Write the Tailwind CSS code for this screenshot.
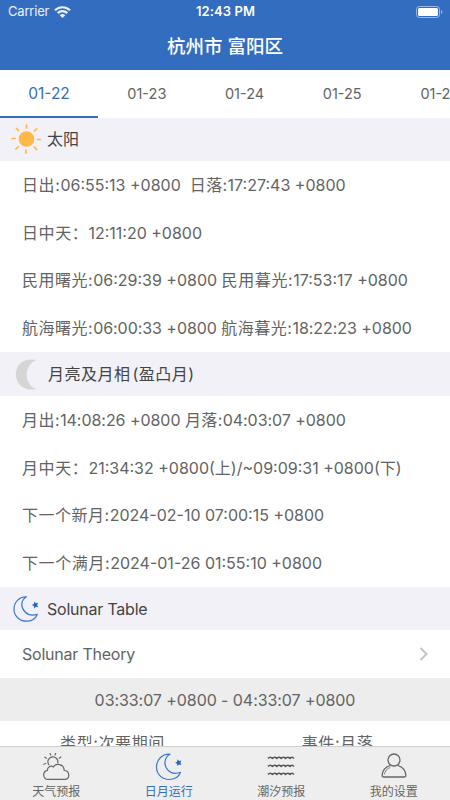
<!DOCTYPE html>
<html lang="zh-CN">

<head>
    <meta charset="UTF-8" />
    <meta name="viewport" content="width=device-width, initial-scale=1.0" />
    <title>日月运行</title>
    <script src="https://cdn.jsdelivr.net/npm/@tailwindcss/browser@4"></script>
</head>

<body class="bg-white font-['Inter','Noto_Sans_CJK_SC',sans-serif] text-[#636363]">
    <div class="flex h-[800px] w-[450px] flex-col overflow-hidden">
        <!-- Status bar and title -->
        <header class="h-[70px] shrink-0 bg-[#336dc0] text-white">
            <div class="grid h-6 grid-cols-3 items-center pr-[7px] pl-2">
                <div class="flex items-center gap-[5px] text-[13px] tracking-[-0.2px] text-white/90">
                    <span>Carrier</span>
                    <svg class="h-3 w-[17px]" viewBox="0 0 17 12" fill="none" stroke="currentColor" stroke-width="2.2">
                        <path d="M1 4.3C5.2.2 11.8.2 16 4.3M3.7 7.1C6.4 4.5 10.6 4.5 13.3 7.1" />
                        <path d="M8.5 12 5.7 9.2C7.3 7.7 9.7 7.7 11.3 9.2Z" fill="currentColor" stroke="none" />
                    </svg>
                </div>
                <span class="text-center text-[13px] font-semibold tracking-[0.1px]">12:43 PM</span>
                <svg class="h-3 w-[27px] justify-self-end" viewBox="0 0 27 12">
                    <rect x=".5" y=".5" width="23" height="11" rx="3" fill="none" stroke="#fff" stroke-opacity=".5" />
                    <rect x="2" y="2" width="20" height="8" rx="1.5" fill="#fff" />
                    <path d="M25 4v4c2-.8 2-3.2 0-4" fill="#fff" fill-opacity=".5" />
                </svg>
            </div>
            <h1 class="flex h-[45px] items-center justify-center text-[18.5px] font-medium">杭州市 富阳区</h1>
        </header>

        <!-- Dates -->
        <nav class="flex h-12 shrink-0 overflow-hidden text-[14.5px]">
            <a class="flex w-[98px] shrink-0 items-center justify-center border-b-[2.5px] border-[#336dc0] pt-[2px] text-[15.5px] text-[#336dc0]">01-22</a>
            <a class="flex w-[97.7px] shrink-0 items-center justify-center">01-23</a>
            <a class="flex w-[97.7px] shrink-0 items-center justify-center">01-24</a>
            <a class="flex w-[97.7px] shrink-0 items-center justify-center">01-25</a>
            <a class="flex w-[97.7px] shrink-0 items-center justify-center">01-26</a>
        </nav>

        <main class="min-h-0 flex-1 overflow-hidden text-base">
            <h2 class="flex h-[43px] items-center bg-[#f2f1f7] pb-px pl-[11px] text-[#444]">
                <svg class="mr-[6px] size-[30px]" viewBox="0 0 30 30" fill="#ffb748" stroke="#ffb748" stroke-width="1.7" stroke-linecap="round">
                    <circle cx="15.5" cy="15" r="7" />
                    <path d="M15.5 1v3M15 26v3M1 14.500h3M26.500 15.500h3M5.500 4.500l2 2.300M25.800 4.800l-2.300 2M4.800 25l2.300-2.200M25.500 25.500l-2.300-2.700" />
                </svg>
                <span>太阳</span>
            </h2>
            <section class="grid h-[191px] grid-rows-4 items-center pl-[22px]">
                <p><span class="tracking-[0.6px]">日出:</span>06:55:13 +0800&nbsp; <span class="tracking-[0.4px]">日落:</span>17:27:43 +0800</p>
                <p><span class="tracking-[0.6px]">日中天：</span>12:11:20 +0800</p>
                <p><span class="tracking-[0.5px]">民用曙光:</span>06:29:39 +0800 <span class="tracking-[0.6px]">民用暮光:</span>17:53:17 +0800</p>
                <p class="tracking-[-0.05px]"><span class="tracking-[0.5px]">航海曙光:</span>06:00:33 +0800 <span class="tracking-[0.5px]">航海暮光:</span>18:22:23 +0800</p>
            </section>

            <h2 class="flex h-11 items-center bg-[#f2f1f7] pl-[15px] text-[#444]">
                <svg class="mr-[11px] h-[31px] w-[22px]" viewBox="0 0 22 31" fill="#d5d5d5">
                    <path d="M21.5 1C6-2 .8 8 .8 15.5S7 33 21.5 30C8.5 26 8.5 6 21.5 1Z" />
                </svg>
                <span class="tracking-[0.5px]">月亮及月相<span class="ml-[2px]">(盈凸月)</span></span>
            </h2>
            <section class="grid h-[191px] grid-rows-4 items-center pl-[22px]">
                <p class="tracking-[-0.05px]"><span class="tracking-[0.5px]">月出:</span>14:08:26 +0800 <span class="tracking-[0.4px]">月落:</span>04:03:07 +0800</p>
                <p><span class="tracking-[0.6px]">月中天：</span>21:34:32 +0800(上)/~09:09:31 +0800(下)</p>
                <p><span class="tracking-[0.5px]">下一个新月:</span>2024-02-10 07:00:15 +0800</p>
                <p><span class="tracking-[0.6px]">下一个满月:</span>2024-01-26 01:55:10 +0800</p>
            </section>

            <h2 class="flex h-[43px] items-center bg-[#f2f1f7] pl-[13px] text-[#444]">
                <svg class="mr-[8px] size-[26px]" viewBox="0 0 26 26" fill="none" stroke="#3c78cf" stroke-width="1.2" stroke-linejoin="round">
                    <path d="M13.500.8C6 .4 1 6.500 1 13.200 1 20 6.700 25.200 13.300 25.200c5.800 0 9.500-3 11-7-3.700 1.200-8.800 1.200-12.200-2.200C7.300 11.200 7.800 4.200 13.500.8Z" />
                    <path d="m21.200 5.600 1.600 1.600 2.400-.3-1.100 2.200 1.100 2.200-2.400-.5-1.700 1.700-.2-2.400-2.200-1.100 2.200-1Z" fill="#2468c4" stroke="none" />
                </svg>
                <span class="tracking-[-0.22px]">Solunar Table</span>
            </h2>
            <a class="flex h-12 items-center justify-between pr-[22px] pl-[22px]">
                <span class="tracking-[-0.22px]">Solunar Theory</span>
                <svg class="h-[14px] w-[9px]" viewBox="0 0 9 14" fill="none" stroke="#c4c4c6" stroke-width="2">
                    <path d="m1.5 1 6 6-6 6" />
                </svg>
            </a>
            <p class="flex h-[43px] items-center justify-center bg-[#ededed] tracking-[-0.07px]">03:33:07 +0800 - 04:33:07 +0800</p>
            <div class="grid h-[43px] grid-cols-2 items-center text-center">
                <p class="tracking-[0.6px]">类型:次要期间</p>
                <p class="tracking-[0.6px]">事件:月落</p>
            </div>
        </main>

        <!-- Bottom tab bar -->
        <nav class="grid h-[54px] shrink-0 grid-cols-4 border-t border-[#cfcfcf] bg-[#eee] text-xs leading-4 text-[#666]">
            <a class="flex flex-col items-center gap-[3px] pt-[6px]">
                <svg class="h-7 w-7" viewBox="0 0 28 28" fill="none" stroke="currentColor" stroke-width="1.2" stroke-linecap="round" stroke-linejoin="round">
                    <path d="M6.200 26.400a4.600 4.600 0 0 1-.8-9.100c-.1-3.200 3.300-5.200 6-3.300 2.300-4.300 10.600-3.300 10.800 3.500 5.800 0 6.200 8.900.6 8.900Z" />
                    <path d="M6.800 11.700A5 5 0 1 1 15.800 9.800M8.700 1.900 8.100.6M13 1.900l.6-1.300M4.500 5.200 2.900 4.200M17.200 5.200l1.700-1.100M3.700 10.500l-1.800.7" />
                </svg>
                <span>天气预报</span>
            </a>
            <a class="flex flex-col items-center gap-[3px] pt-[6px] text-[#336dc0]">
                <svg class="h-7 w-7" viewBox="0 0 28 28" fill="none" stroke="#3c78cf" stroke-width="1.2" stroke-linejoin="round">
                    <path d="M15 1.200C7 .7 1.500 7 1.500 14S7 26.500 14 26.500c6 0 10-3 11.500-7.200-3.800 1.500-8.800 1.500-12.300-2C8.500 12.500 8.700 4.800 15 1.200Z" />
                    <path d="m22.500 6.200 1.600 1.700 2.300-.3-1 2.200 1 2.100-2.400-.5-1.700 1.700-.2-2.300-2.100-1.100 2.100-1Z" fill="#2468c4" stroke="none" />
                </svg>
                <span>日月运行</span>
            </a>
            <a class="flex flex-col items-center gap-[3px] pt-[6px]">
                <svg class="h-7 w-7" viewBox="0 0 28 28" fill="none" stroke="#555" stroke-width="1.5" stroke-linejoin="round">
                    <path d="M1 5.500q2.200-2.500 4.400 0 2-2.500 4.400 0 2-2.500 4.400 0 2-2.500 4.400 0 2-2.500 4.400 0 2-2.500 4 0" />
                    <path d="M1 13.500q2.200-2.500 4.400 0 2-2.500 4.400 0 2-2.500 4.400 0 2-2.500 4.400 0 2-2.500 4.400 0 2-2.500 4 0" />
                    <path d="M1 21.500q2.200-2.500 4.400 0 2-2.500 4.400 0 2-2.500 4.400 0 2-2.500 4.400 0 2-2.500 4.400 0 2-2.500 4 0" />
                </svg>
                <span>潮汐预报</span>
            </a>
            <a class="flex flex-col items-center gap-[3px] pt-[6px]">
                <svg class="h-7 w-7" viewBox="0 0 28 28" fill="none" stroke="currentColor" stroke-width="1.3" stroke-linecap="round" stroke-linejoin="round">
                    <circle cx="14" cy="7" r="6" />
                    <path d="M10 12.500C5.500 14 2.500 18 2.200 22c-.1 1.400.4 2 1.800 2h20c1.400 0 1.900-.6 1.800-2C25.500 18 22.500 14 18 12.500" />
                    <path d="M4.500 21c.5-3 2.500-5.500 5.500-6.500" stroke-width=".8" />
                </svg>
                <span>我的设置</span>
            </a>
        </nav>
    </div>
</body>

</html>
